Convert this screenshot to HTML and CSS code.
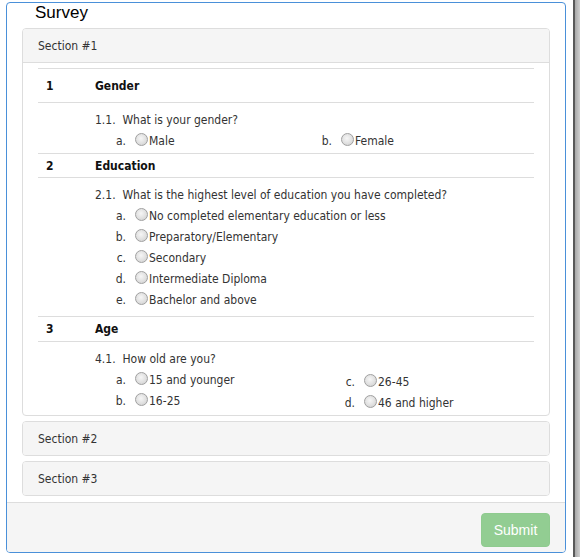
FILE: index.html
```html
<!DOCTYPE html>
<html>
<head>
<meta charset="utf-8">
<link rel="stylesheet" href="styles.css">
</head>
<body>
<div class="screen">
  <div class="survey">
    <div class="survey-body">
      <h1 class="title">Survey</h1>
      <div class="group">
        <div class="panel">
          <div class="panel-heading open">Section #1</div>
          <div class="panel-body">
            <div class="row row-first"><span class="num">1</span><span class="name">Gender</span></div>
            <div class="q q-gender">
              <div class="qtext">1.1.&nbsp; What is your gender?</div>
              <div class="opts">
                <div class="col col-g"><div class="opt"><span class="letter">a.</span><span class="radio"></span><span>Male</span></div></div>
                <div class="col"><div class="opt"><span class="letter">b.</span><span class="radio"></span><span>Female</span></div></div>
              </div>
            </div>
            <div class="row"><span class="num">2</span><span class="name">Education</span></div>
            <div class="q q-edu">
              <div class="qtext">2.1.&nbsp; What is the highest level of education you have completed?</div>
              <div class="opt"><span class="letter">a.</span><span class="radio"></span><span>No completed elementary education or less</span></div>
              <div class="opt"><span class="letter">b.</span><span class="radio"></span><span>Preparatory/Elementary</span></div>
              <div class="opt"><span class="letter">c.</span><span class="radio"></span><span>Secondary</span></div>
              <div class="opt"><span class="letter">d.</span><span class="radio"></span><span>Intermediate Diploma</span></div>
              <div class="opt"><span class="letter">e.</span><span class="radio"></span><span>Bachelor and above</span></div>
            </div>
            <div class="row row-age"><span class="num">3</span><span class="name">Age</span></div>
            <div class="q q-age">
              <div class="qtext">4.1.&nbsp; How old are you?</div>
              <div class="opts">
                <div class="col col-a">
                  <div class="opt"><span class="letter">a.</span><span class="radio"></span><span>15 and younger</span></div>
                  <div class="opt"><span class="letter">b.</span><span class="radio"></span><span>16-25</span></div>
                </div>
                <div class="col col-shift">
                  <div class="opt"><span class="letter">c.</span><span class="radio"></span><span>26-45</span></div>
                  <div class="opt"><span class="letter">d.</span><span class="radio"></span><span>46 and higher</span></div>
                </div>
              </div>
            </div>
          </div>
        </div>
        <div class="panel">
          <div class="panel-heading">Section #2</div>
        </div>
        <div class="panel">
          <div class="panel-heading">Section #3</div>
        </div>
      </div>
    </div>
    <div class="footer">
      <button class="btn" disabled>Submit</button>
    </div>
  </div>
  <div class="strip"></div>
</div>
</body>
</html>
```

FILE: styles.css
```css
html, body {
  margin: 0;
  padding: 0;
  background: #fff;
}
.screen {
  display: flex;
  height: 557px;
  font-family: "DejaVu Sans Condensed", "DejaVu Sans", sans-serif;
  font-stretch: condensed;
  font-size: 12px;
  color: #333;
}
.survey {
  margin: 2px 0 0 6px;
  width: 560px;
  height: 551px;
  box-sizing: border-box;
  border: 1px solid #4a90d9;
  border-radius: 4px;
  display: flex;
  flex-direction: column;
  overflow: hidden;
}
.survey-body {
  padding: 0 15px;
  flex: 1;
}
.title {
  margin: 0 0 6px 13px;
  font-family: "Liberation Sans", Arial, sans-serif;
  font-stretch: normal;
  font-weight: normal;
  font-size: 17px;
  line-height: 19px;
  color: #000;
}
.group {
  display: flex;
  flex-direction: column;
  gap: 5px;
}
.panel {
  border: 1px solid #ddd;
  border-radius: 4px;
  overflow: hidden;
}
.panel-heading {
  background: #f5f5f5;
  padding: 9px 15px 7px;
  line-height: 17px;
}
.panel-heading.open {
  border-bottom: 1px solid #ddd;
}
.panel-body {
  padding: 5px 15px 0;
}
.row {
  display: grid;
  grid-template-columns: 57px 1fr;
  border-top: 1px solid #ddd;
  border-bottom: 1px solid #ddd;
  font-weight: bold;
  color: #111;
  padding-top: 1px;
  line-height: 22px;
}
.row-first {
  padding-top: 2px;
  line-height: 31px;
}
.row-age {
  padding-top: 1px;
  line-height: 23px;
}
.num {
  padding-left: 8px;
}
.q {
  padding: 7px 0 0 57px;
  line-height: 21px;
}
.q-gender { padding-bottom: 1px; }
.q-edu { padding-bottom: 5px; }
.q-age { padding-bottom: 1px; }
.opts {
  display: flex;
}
.col-g { width: 206px; }
.col-a { width: 229px; }
.col-shift { padding-top: 2px; }
.opt {
  display: flex;
  align-items: center;
  height: 21px;
}
.letter {
  width: 31px;
  text-align: right;
  margin-right: 9px;
}
.radio {
  width: 11px;
  height: 11px;
  border: 1px solid #a0a0a0;
  border-radius: 50%;
  background: radial-gradient(circle at 45% 40%, #f6f6f6 0%, #e0e0e0 55%, #cbcbcb 100%);
  margin: 0 1px 4px 0;
  flex: none;
}
.footer {
  flex: none;
  border-top: 1px solid #ddd;
  background: #f5f5f5;
  padding: 10px 15px 0;
  height: 50px;
  box-sizing: border-box;
  display: flex;
  justify-content: flex-end;
  align-items: flex-start;
}
.btn {
  width: 69px;
  height: 34px;
  border: 1px solid #8fcb8f;
  border-radius: 4px;
  background: #92cd92;
  color: #fff;
  font-family: "Liberation Sans", Arial, sans-serif;
  font-size: 14px;
  padding: 0;
}
.strip {
  margin-left: auto;
  width: 7px;
  height: 557px;
  background: linear-gradient(to right, #5a5a5a 0, #5a5a5a 2px, #a8a8a8 2px, #d0d0d0 100%);
}
```
